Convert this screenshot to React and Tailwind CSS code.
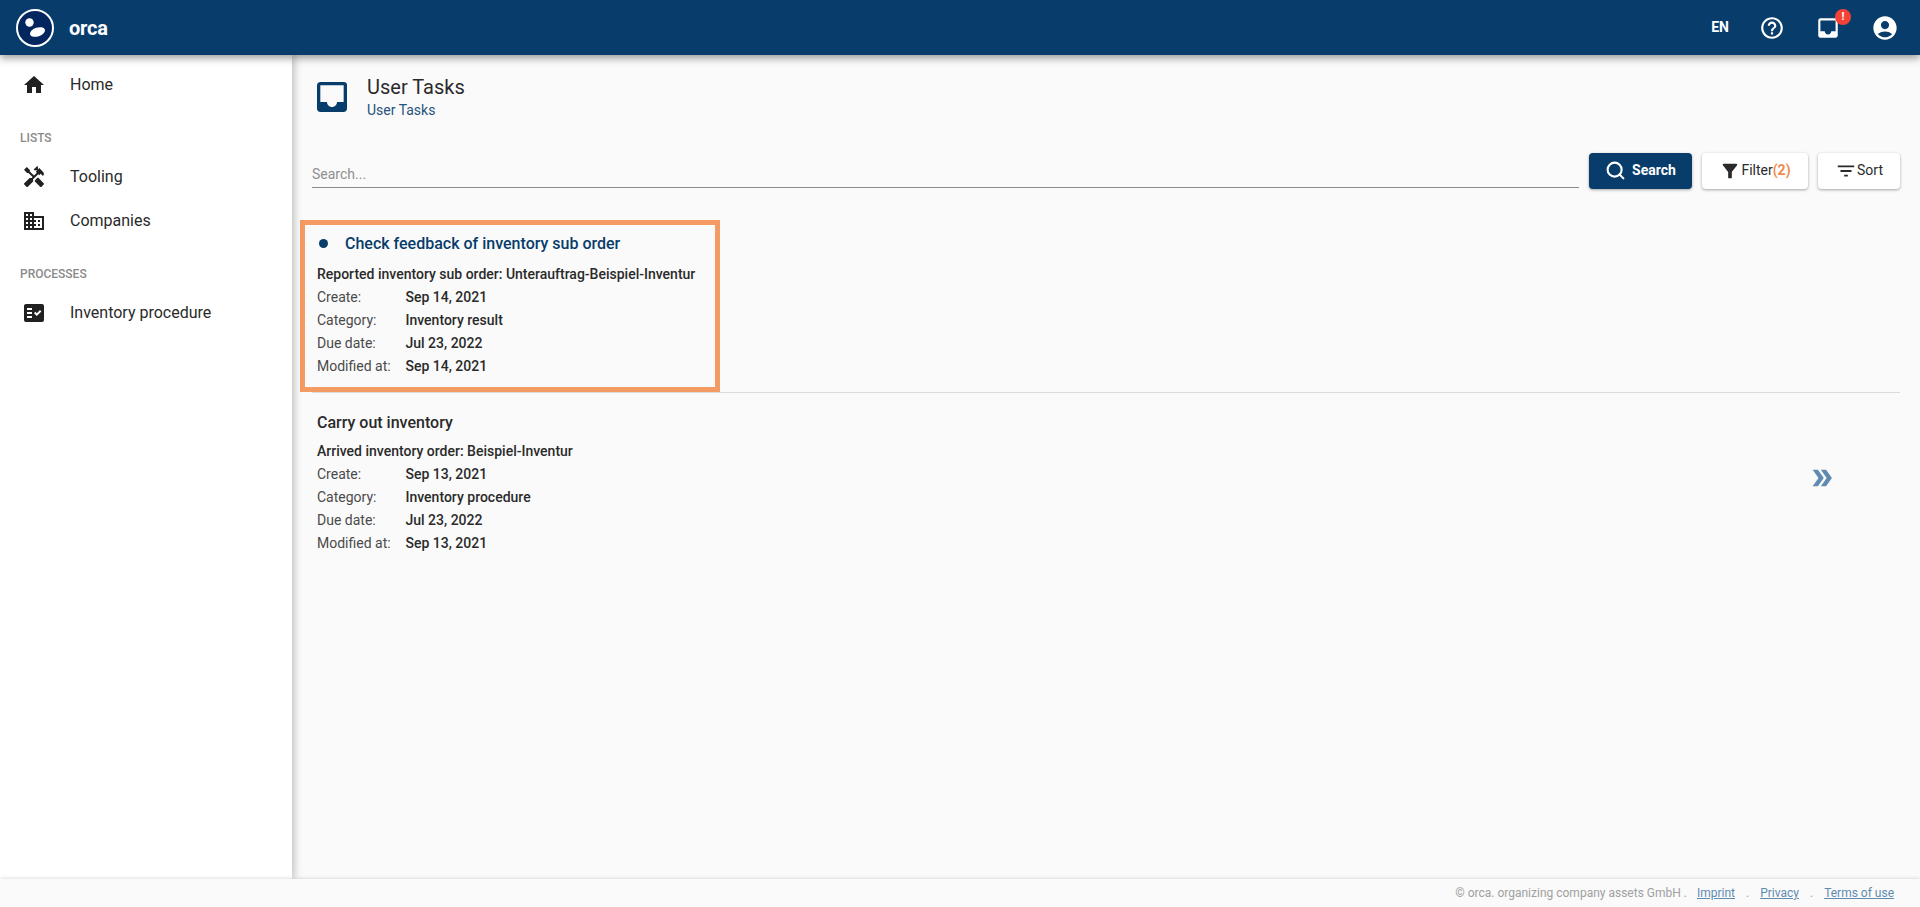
import React from "react";
import { Search } from "lucide-react";
import {
  MdHome,
  MdHandyman,
  MdDomain,
  MdFactCheck,
  MdHelpOutline,
  MdInbox,
  MdAccountCircle,
  MdFilterAlt,
  MdFilterList,
  MdDoubleArrow,
} from "react-icons/md";

function NavItem({ icon: Icon, label }) {
  return (
    <div className="flex items-center h-[44px] pl-[22px]">
      <Icon className="text-[24px] text-[#212121]" />
      <span className="ml-[24px] text-[16px] text-[#2a2a2a]">{label}</span>
    </div>
  );
}

function NavLabel({ children }) {
  return (
    <div className="h-[48px] pl-[20px] pt-[24px] text-[12px] leading-[14px] font-medium text-[#8a8a8a] uppercase">
      {children}
    </div>
  );
}

function TaskFields({ intro, rows }) {
  return (
    <div className="text-[14px] text-[#2a2a2a]">
      <div className="h-[24px] leading-[24px] font-medium">{intro}</div>
      {rows.map(([label, value]) => (
        <div key={label} className="flex h-[23px] leading-[23px]">
          <span className="w-[88.5px] text-[#4a4a4a]">{label}</span>
          <span className="font-medium">{value}</span>
        </div>
      ))}
    </div>
  );
}

export default function App() {
  return (
    <div className="relative h-[907px] flex flex-col overflow-hidden bg-[#fafafa] font-['Roboto',sans-serif]">
      {/* header */}
      <header className="relative z-20 h-[55px] shrink-0 flex items-center bg-[#073c6b] text-white shadow-[0_3px_8px_rgba(0,0,0,0.4)]">
        <svg width="40" height="40" viewBox="0 0 40 40" className="ml-[15px]">
          <circle cx="20" cy="20" r="18" fill="#04265e" stroke="#fff" strokeWidth="2" />
          <circle cx="14.5" cy="14.5" r="4.2" fill="#fff" />
          <ellipse cx="22.5" cy="24" rx="7.8" ry="4.4" fill="#fff" transform="rotate(-18 22.5 24)" />
        </svg>
        <span className="ml-[14px] text-[20px] font-bold tracking-[-0.2px]">orca</span>
        <div className="ml-auto flex items-center">
          <span className="text-[14px] font-bold">EN</span>
          <MdHelpOutline className="ml-[30px] text-[26px]" />
          <div className="relative ml-[30px]">
            <MdInbox className="text-[26px]" />
            <span className="absolute -top-[6px] -right-[10px] w-[16px] h-[16px] rounded-full bg-[#f44336] text-[11px] leading-[16px] text-center font-bold">
              !
            </span>
          </div>
          <MdAccountCircle className="ml-[30px] mr-[21px] text-[28px]" />
        </div>
      </header>

      <div className="flex-1 flex min-h-0">
        {/* sidebar */}
        <aside className="relative z-10 w-[292px] shrink-0 bg-white pt-[8px] shadow-[2px_0_8px_rgba(0,0,0,0.25)]">
          <NavItem icon={MdHome} label="Home" />
          <NavLabel>Lists</NavLabel>
          <NavItem icon={MdHandyman} label="Tooling" />
          <NavItem icon={MdDomain} label="Companies" />
          <NavLabel>Processes</NavLabel>
          <NavItem icon={MdFactCheck} label="Inventory procedure" />
        </aside>

        {/* content */}
        <main className="flex-1 min-w-0 pl-[20px] pr-[20px]">
          <div className="flex pt-[19px] h-[98px]">
            <MdInbox className="text-[40px] mt-[3px] text-[#073c6b]" />
            <div className="ml-[15px]">
              <div className="text-[20px] leading-[26px] text-[#2a2a2a]">User Tasks</div>
              <div className="text-[14px] leading-[20px] text-[#27527a]">User Tasks</div>
            </div>
          </div>

          <div className="flex items-center h-[36px]">
            <div className="flex-1 self-start pt-[12px]">
              <div className="h-[23px] border-b border-[#8c8c8c] text-[14px] leading-[18px] text-[#8f8f8f]">
                Search...
              </div>
            </div>
            <button className="ml-[10px] w-[103px] h-[36px] pb-px flex items-center justify-center rounded bg-[#073c6b] text-white text-[14px] font-bold shadow-[0_1px_3px_rgba(0,0,0,0.35)]">
              <Search size={21} strokeWidth={2.4} className="mr-[6px]" />
              Search
            </button>
            <button className="ml-[10px] w-[106px] h-[36px] pb-px flex items-center justify-center rounded bg-white text-[14px] text-[#2a2a2a] shadow-[0_1px_3px_rgba(0,0,0,0.35)]">
              <MdFilterAlt className="text-[22px]" />
              Filter<span className="font-bold text-[#f0894b]">(2)</span>
            </button>
            <button className="ml-[10px] w-[82px] h-[36px] pb-px flex items-center justify-center rounded bg-white text-[14px] text-[#2a2a2a] shadow-[0_1px_3px_rgba(0,0,0,0.35)]">
              <MdFilterList className="text-[22px]" />
              Sort
            </button>
          </div>

          {/* first task, highlighted */}
          <div className="border-b border-[#dcdcdc] mt-[31px]">
            <div className="-ml-[12px] w-[420px] h-[172px] border-[5px] border-[#f49b63] pl-[12px]">
              <div className="flex items-center h-[37px]">
                <span className="w-[9px] h-[9px] ml-[2px] rounded-full bg-[#073c6b]" />
                <span className="ml-[17px] text-[16px] font-medium text-[#073c6b]">
                  Check feedback of inventory sub order
                </span>
              </div>
              <TaskFields
                intro="Reported inventory sub order: Unterauftrag-Beispiel-Inventur"
                rows={[
                  ["Create:", "Sep 14, 2021"],
                  ["Category:", "Inventory result"],
                  ["Due date:", "Jul 23, 2022"],
                  ["Modified at:", "Sep 14, 2021"],
                ]}
              />
            </div>
          </div>

          {/* second task */}
          <div className="flex items-center">
            <div className="pl-[5px] pt-[16px]">
              <div className="h-[30px] leading-[27px] text-[16px] font-medium text-[#2a2a2a]">Carry out inventory</div>
              <TaskFields
                intro="Arrived inventory order: Beispiel-Inventur"
                rows={[
                  ["Create:", "Sep 13, 2021"],
                  ["Category:", "Inventory procedure"],
                  ["Due date:", "Jul 23, 2022"],
                  ["Modified at:", "Sep 13, 2021"],
                ]}
              />
            </div>
            <MdDoubleArrow className="ml-auto mr-[64px] mt-[8px] text-[28px] text-[#5f8bb0]" />
          </div>
        </main>
      </div>

      {/* footer */}
      <footer className="relative z-20 h-[28px] shrink-0 flex items-center justify-end pr-[26px] bg-[#fafafa] text-[12px] text-[#a0a0a0] shadow-[0_-1px_3px_rgba(0,0,0,0.12)]">
        <span>© orca. organizing company assets GmbH .</span>
        <a className="ml-[10px] underline text-[#5f8bb0]">Imprint</a>
        <span className="mx-[11px]">.</span>
        <a className="underline text-[#5f8bb0]">Privacy</a>
        <span className="mx-[11px]">.</span>
        <a className="underline text-[#5f8bb0]">Terms of use</a>
      </footer>
    </div>
  );
}
